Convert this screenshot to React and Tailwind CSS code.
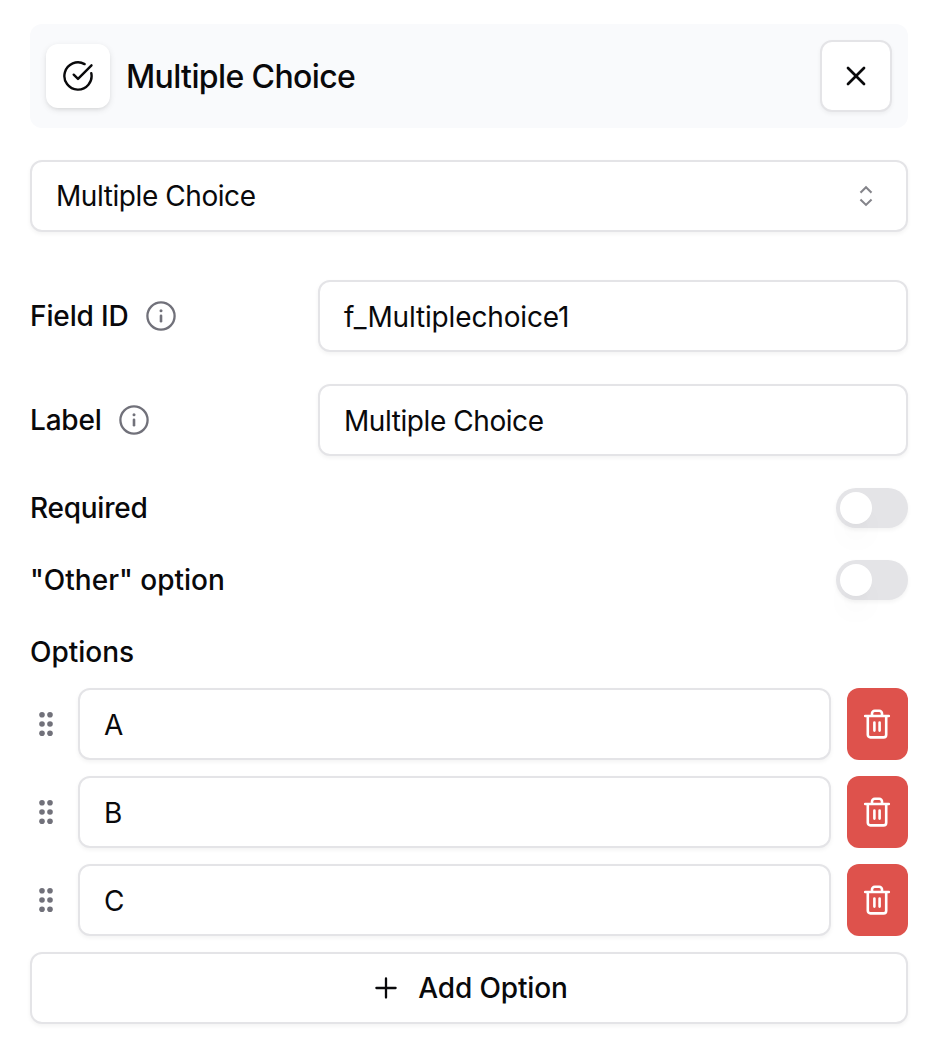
import { X } from "lucide-react";

const box =
  "h-[72px] rounded-xl border-2 border-[#e4e4e7] bg-white shadow-[0_2px_4px_rgba(0,0,0,0.05)]";

function CheckIcon() {
  return (
    <svg className="size-8" viewBox="0 0 32 32" fill="none" stroke="currentColor" strokeWidth="2.4" strokeLinecap="round" strokeLinejoin="round">
      <path d="M29.3 13.2A13.6 13.6 0 1 1 22.6 4.1" />
      <path d="m11.7 14.7 4.3 4.2L29.5 5.3" />
    </svg>
  );
}

function InfoIcon() {
  return (
    <svg className="size-8 text-[#71717a]" viewBox="0 0 32 32" fill="none" stroke="currentColor">
      <circle cx="16" cy="16" r="13.6" strokeWidth="2.3" />
      <path d="M16 15.8V21.2" strokeWidth="2.6" strokeLinecap="round" />
      <circle cx="16" cy="10.8" r="1.5" fill="currentColor" stroke="none" />
    </svg>
  );
}

function GripIcon() {
  return (
    <svg className="size-8 shrink-0" viewBox="0 0 32 32" fill="#71717a">
      {[6.7, 16, 25.3].map((y) => (
        <g key={y}>
          <circle cx="12" cy={y} r="2.8" />
          <circle cx="20" cy={y} r="2.8" />
        </g>
      ))}
    </svg>
  );
}

function TrashIcon() {
  return (
    <svg className="mr-px size-8" viewBox="0 0 32 32" fill="none" stroke="white" strokeWidth="2.6" strokeLinecap="round" strokeLinejoin="round">
      <path d="M4.2 8h23.6M6.8 8v18.8a2.6 2.6 0 0 0 2.6 2.6h13.2a2.6 2.6 0 0 0 2.6-2.6V8M11 8V5.5a2.7 2.7 0 0 1 2.7-2.7h4.6A2.7 2.7 0 0 1 21 5.5V8" />
      <path d="M13.4 14.6v8M18.6 14.6v8" />
    </svg>
  );
}

function Field({ label, labelClass, value, valueClass }) {
  return (
    <div className="flex items-center">
      <label className={`flex w-72 items-center font-medium ${labelClass}`}>
        <span className="mr-4">{label}</span>
        <InfoIcon />
      </label>
      <div className={`${box} flex flex-1 items-center px-6 pt-0.5 ${valueClass}`}>{value}</div>
    </div>
  );
}

function Toggle({ label, labelClass = "" }) {
  return (
    <div className="flex h-10 items-center justify-between font-medium">
      <span className={labelClass}>{label}</span>
      <button
        aria-label={label}
        className="flex h-10 w-[72px] items-center rounded-full bg-[#e4e4e7] px-1 shadow-[0_2px_4px_rgba(0,0,0,0.05)]"
      >
        <span className="size-8 rounded-full bg-white shadow-[0_20px_30px_-6px_rgba(0,0,0,0.05),0_8px_12px_-8px_rgba(0,0,0,0.05)]" />
      </button>
    </div>
  );
}

export default function App() {
  return (
    <main className="h-[1046px] w-[936px] bg-white pl-[30px] pr-7 pt-6 font-['Inter',sans-serif] text-[28px] leading-10 text-[#09090b]">
      <header className="flex h-[104px] items-center rounded-xl bg-[#f9fafc] px-4">
        <div className="flex size-16 items-center justify-center rounded-xl bg-white shadow-[0_2px_6px_rgba(0,0,0,0.1),0_2px_4px_-2px_rgba(0,0,0,0.1)]">
          <CheckIcon />
        </div>
        <h1 className="ml-4 flex-1 pt-0.5 text-[32px] font-medium tracking-[-0.62px]">Multiple Choice</h1>
        <button aria-label="Close" className={`${box} flex w-[72px] items-center justify-center`}>
          <X size={32} strokeWidth={2} />
        </button>
      </header>

      <div className={`${box} mt-8 flex items-center justify-between px-6`}>
        <span className="tracking-[-0.43px]">Multiple Choice</span>
        <svg className="size-8" viewBox="0 0 32 32" fill="none" stroke="#84848a" strokeWidth="2.1" strokeLinecap="square">
          <path d="m11.2 11.9 4.8-4.6 4.8 4.6M11.2 20.3l4.8 4.6 4.8-4.6" />
        </svg>
      </div>

      <section className="mt-12 flex flex-col gap-8">
        <Field label="Field ID" labelClass="tracking-[-0.12px]" value="f_Multiplechoice1" valueClass="tracking-[-0.15px]" />
        <Field label="Label" labelClass="tracking-[-0.2px]" value="Multiple Choice" valueClass="tracking-[-0.43px]" />
        <Toggle label="Required" labelClass="tracking-[-0.25px]" />
        <Toggle label={'"Other" option'} />
      </section>

      <h2 className="mt-8 font-medium">Options</h2>
      <section className="mt-4 flex flex-col gap-4">
        {["A", "B", "C"].map((value) => (
          <div key={value} className="flex items-center">
            <GripIcon />
            <div className={`${box} mx-4 flex flex-1 items-center px-6 pt-0.5`}>{value}</div>
            <button
              aria-label={`Delete ${value}`}
              className="flex h-[72px] w-[61px] items-center justify-center rounded-xl bg-[#de524c]"
            >
              <TrashIcon />
            </button>
          </div>
        ))}
      </section>

      <button className={`${box} mt-4 flex w-full items-center justify-center gap-4 font-medium tracking-[-0.15px]`}>
        <svg className="size-8" viewBox="0 0 32 32" fill="none" stroke="currentColor" strokeWidth="2.3" strokeLinecap="round">
          <path d="M16 6.4v19.2M6.4 16h19.2" />
        </svg>
        Add Option
      </button>
    </main>
  );
}
